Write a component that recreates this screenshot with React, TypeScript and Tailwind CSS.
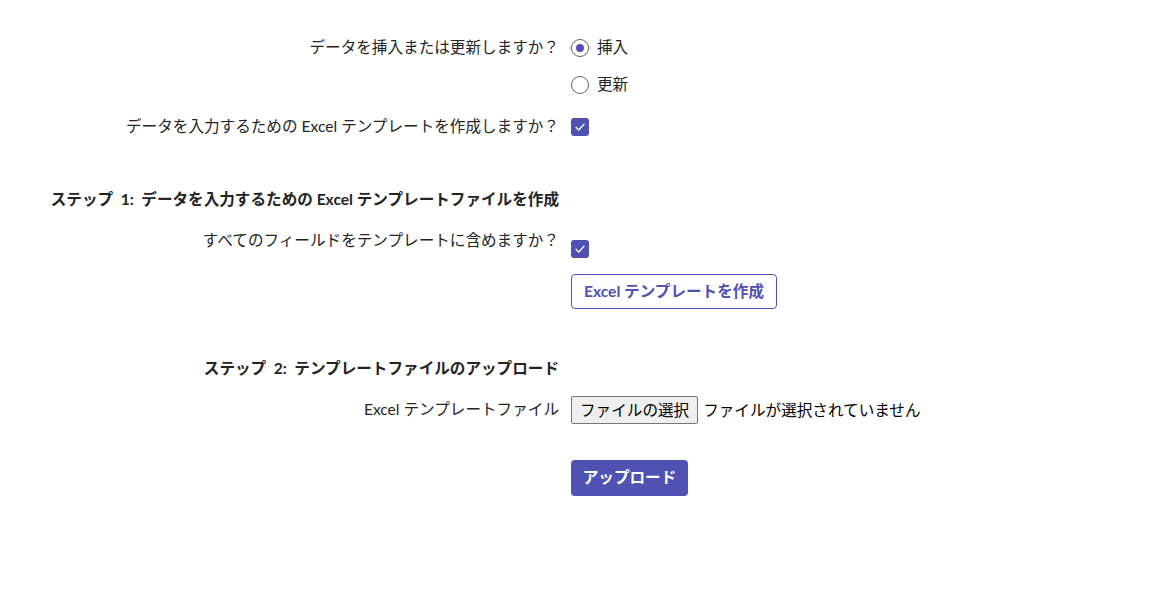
import React from "react";

const font = { fontFamily: "Lato, 'Noto Sans CJK JP', sans-serif" };

const Row = ({ label, children, className = "" }: { label?: React.ReactNode; children?: React.ReactNode; className?: string }) => (
  <div className={`grid grid-cols-[559px_1fr] gap-x-3 items-center ${className}`}>
    <div className="text-right">{label}</div>
    <div className="flex items-center">{children}</div>
  </div>
);

const Radio = ({ checked, label }: { checked?: boolean; label: string }) => (
  <label className="flex items-center gap-2">
    <span className="flex h-[18px] w-[18px] items-center justify-center rounded-full border border-[#616161] bg-white">
      {checked && <span className="h-2 w-2 rounded-full bg-[#4f52b2]" />}
    </span>
    <span>{label}</span>
  </label>
);

const Checkbox = ({ className = "" }: { className?: string }) => (
  <span className={`flex h-[18px] w-[18px] items-center justify-center rounded-[3px] bg-[#4f52b2] ${className}`}>
    <svg width="12" height="12" viewBox="0 0 12 12" fill="none">
      <path d="M2 6.3 4.7 9 10 3.2" stroke="white" strokeWidth="1.3" strokeLinecap="round" strokeLinejoin="round" />
    </svg>
  </span>
);

export default function App() {
  return (
    <div className="min-h-[603px] w-full bg-white text-[15.6px] text-[#242424]" style={font}>
      <div className="flex flex-col pt-[36px]">
        <Row label="データを挿入または更新しますか？" className="h-[24px]">
          <Radio checked label="挿入" />
        </Row>
        <Row className="mt-[13px] h-[24px]">
          <Radio label="更新" />
        </Row>
        <Row label="データを入力するための Excel テンプレートを作成しますか？" className="mt-[18px] h-[24px]">
          <Checkbox />
        </Row>

        <Row label={<span className="font-bold">ステップ&nbsp; 1:&nbsp; データを入力するための Excel テンプレートファイルを作成</span>} className="mt-[49px] h-[24px]" />
        <Row label="すべてのフィールドをテンプレートに含めますか？" className="mt-[17px] h-[24px]">
          <Checkbox className="translate-y-2" />
        </Row>
        <Row className="mt-[21px]">
          <button className="h-[35px] rounded-[4px] border border-[#4f52b2] bg-white px-3 font-bold text-[#4f52b2]">
            Excel テンプレートを作成
          </button>
        </Row>

        <Row label={<span className="font-bold">ステップ&nbsp; 2:&nbsp; テンプレートファイルのアップロード</span>} className="mt-[48px] h-[24px]" />
        <Row label="Excel テンプレートファイル" className="mt-[15px] h-[28px]">
          <span className="flex items-center" style={{ fontFamily: "'Noto Sans CJK JP', sans-serif" }}>
            <span className="flex h-[28px] items-center rounded-[2px] border border-[#767676] bg-[#efefef] px-[8px] text-[15.6px] text-black">
              ファイルの選択
            </span>
            <span className="ml-[5px] text-[15.6px] text-black">ファイルが選択されていません</span>
          </span>
        </Row>
        <Row className="mt-[36px]">
          <button className="h-[36px] w-[117px] rounded-[4px] bg-[#4f52b2] font-bold text-white">
            アップロード
          </button>
        </Row>
      </div>
    </div>
  );
}
